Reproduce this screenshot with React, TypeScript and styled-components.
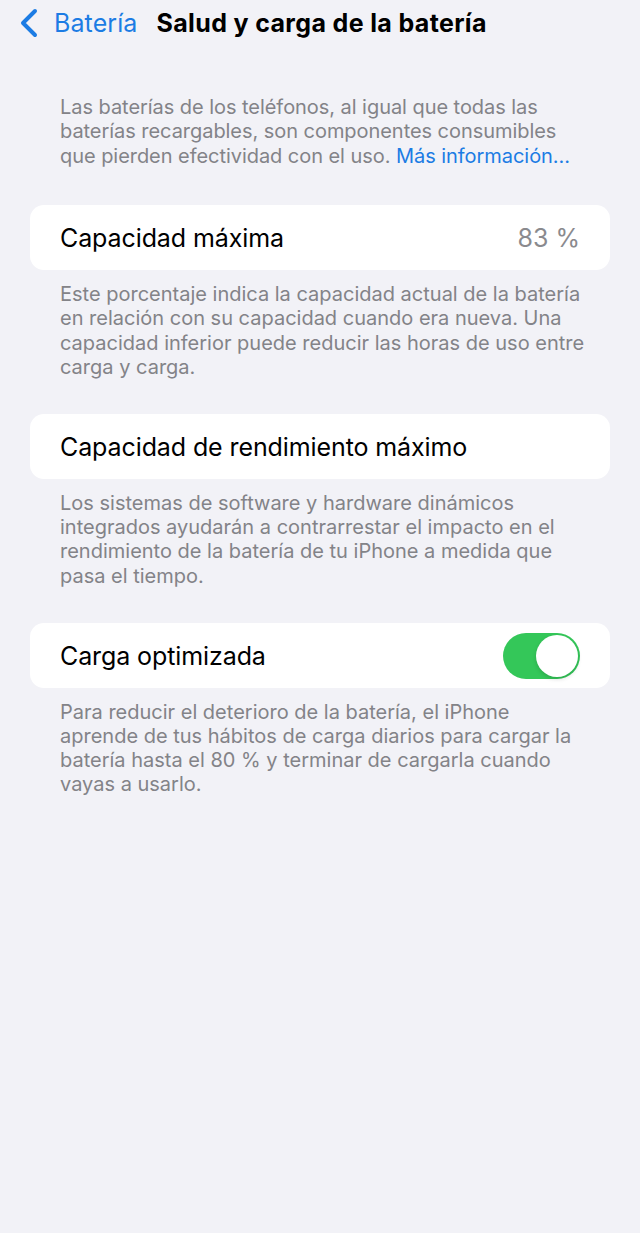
import styled, { createGlobalStyle } from 'styled-components';

const GlobalStyle = createGlobalStyle`
  html, body {
    margin: 0;
    padding: 0;
    background: #f2f2f7;
  }
  body {
    font-family: Inter, "Liberation Sans", sans-serif;
    -webkit-font-smoothing: antialiased;
  }
`;

function ChevronLeft() {
  return (
    <svg width="22" height="30" viewBox="0 0 22 30" fill="none">
      <path d="M17 3 L5 15 L17 27" stroke="#1c7ce4" strokeWidth="4" strokeLinecap="round" strokeLinejoin="round" />
    </svg>
  );
}

type Section = {
  label: string;
  value?: string;
  toggle?: boolean;
  footer: string[];
};

const sections: Section[] = [
  {
    label: 'Capacidad máxima',
    value: '83 %',
    footer: [
      'Este porcentaje indica la capacidad actual de la batería',
      'en relación con su capacidad cuando era nueva. Una',
      'capacidad inferior puede reducir las horas de uso entre',
      'carga y carga.',
    ],
  },
  {
    label: 'Capacidad de rendimiento máximo',
    footer: [
      'Los sistemas de software y hardware dinámicos',
      'integrados ayudarán a contrarrestar el impacto en el',
      'rendimiento de la batería de tu iPhone a medida que',
      'pasa el tiempo.',
    ],
  },
  {
    label: 'Carga optimizada',
    toggle: true,
    footer: [
      'Para reducir el deterioro de la batería, el iPhone',
      'aprende de tus hábitos de carga diarios para cargar la',
      'batería hasta el 80 % y terminar de cargarla cuando',
      'vayas a usarlo.',
    ],
  },
];

export default function App() {
  return (
    <>
      <GlobalStyle />
      <Page>
        <NavBar>
          <BackButton>
            <ChevronLeft />
            <span>Batería</span>
          </BackButton>
          <Title>Salud y carga de la batería</Title>
        </NavBar>

        <Intro>
          <Line>Las baterías de los teléfonos, al igual que todas las</Line>
          <Line>baterías recargables, son componentes consumibles</Line>
          <Line>
            que pierden efectividad con el uso. <Link>Más información…</Link>
          </Line>
        </Intro>

        {sections.map((s) => (
          <Group key={s.label}>
            <Card>
              <Label>{s.label}</Label>
              {s.value && <Value>{s.value}</Value>}
              {s.toggle && (
                <Switch $on>
                  <Knob />
                </Switch>
              )}
            </Card>
            <Footer>
              {s.footer.map((l) => (
                <Line key={l}>{l}</Line>
              ))}
            </Footer>
          </Group>
        ))}
      </Page>
    </>
  );
}

const Page = styled.div`
  min-height: 1233px;
  background: #f2f2f7;
  display: flex;
  flex-direction: column;
`;

const NavBar = styled.div`
  height: 46px;
  display: flex;
  align-items: center;
  padding-left: 18px;
  gap: 19px;
`;

const BackButton = styled.div`
  display: flex;
  align-items: center;
  gap: 14px;
  color: #1c7ce4;
  font-size: 25px;
  letter-spacing: 0.1px;
`;

const Title = styled.div`
  font-size: 25px;
  font-weight: 700;
  color: #000;
  letter-spacing: 0.35px;
`;

const Intro = styled.div`
  margin-top: 49px;
  padding: 0 60px 2px;
  font-size: 20px;
  line-height: 24.3px;
  color: #838388;
  letter-spacing: -0.05px;
`;

const Line = styled.div`
  white-space: nowrap;
`;

const Link = styled.span`
  color: #1c7ce4;
`;

const Group = styled.div`
  margin-top: 35.5px;
`;

const Card = styled.div`
  margin: 0 30px;
  height: 65px;
  border-radius: 14px;
  background: #fff;
  display: flex;
  align-items: center;
  justify-content: space-between;
  padding: 0 30px;
`;

const Label = styled.div`
  font-size: 25px;
  color: #000;
  letter-spacing: -0.1px;
`;

const Value = styled.div`
  font-size: 25px;
  color: #8a8a8e;
  letter-spacing: 0;
`;

const Switch = styled.div<{ $on?: boolean }>`
  width: 77px;
  height: 46px;
  border-radius: 23px;
  background: ${(p) => (p.$on ? '#34c759' : '#e5e5ea')};
  display: flex;
  align-items: center;
  justify-content: ${(p) => (p.$on ? 'flex-end' : 'flex-start')};
  padding: 0 2px;
  box-sizing: border-box;
`;

const Knob = styled.div`
  width: 42px;
  height: 42px;
  border-radius: 50%;
  background: #fff;
  box-shadow: 0 2px 4px rgba(0, 0, 0, 0.15);
`;

const Footer = styled.div`
  margin-top: 12px;
  padding: 0 60px;
  font-size: 20px;
  line-height: 24.1px;
  color: #838388;
  letter-spacing: 0;
`;
